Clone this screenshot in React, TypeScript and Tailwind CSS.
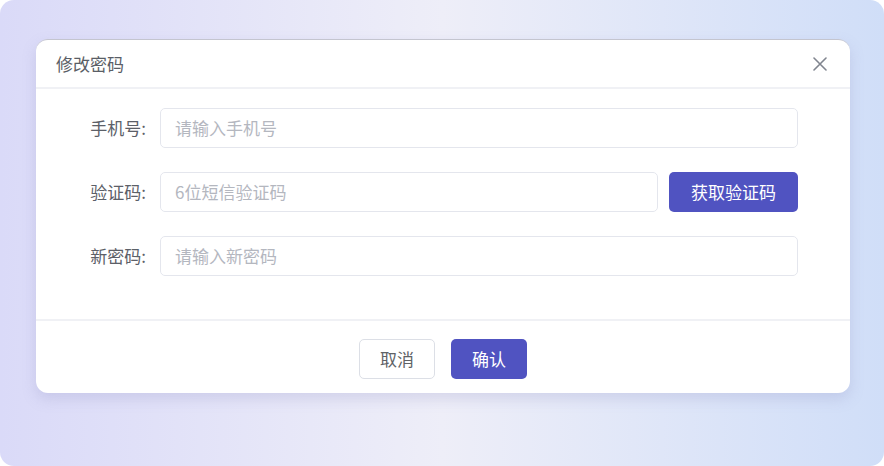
import React from "react";

const font = { fontFamily: '"Noto Sans CJK SC", "Noto Sans", sans-serif' };

function Row({ label, placeholder, withButton }: { label: string; placeholder: string; withButton?: boolean }) {
  return (
    <div className="flex items-center">
      <div className="w-[124px] pr-[14px] text-right text-[17px] text-[#5c6068]">{label}:</div>
      <div className="flex flex-1 items-center gap-[11px]">
        <div className="flex h-[40px] flex-1 items-center rounded-[5px] border border-[#e4e6ed] px-[14px] text-[17px] text-[#b4b7bf]">
          {placeholder}
        </div>
        {withButton && (
          <button className="h-[40px] w-[129px] rounded-[5px] bg-[#5053c1] text-[17px] text-white">获取验证码</button>
        )}
      </div>
    </div>
  );
}

export default function App() {
  return (
    <div className="h-[466px] w-[884px] bg-white" style={font}>
      <div className="h-full w-full rounded-[14px] bg-gradient-to-r from-[#dadaf8] via-[#eeeef8] to-[#d0def8] px-[36px] pt-[39px]">
        <div className="h-[354px] w-[814px] overflow-hidden rounded-[12px] border-t border-[#c4c5cf] bg-white shadow-[0_6px_14px_rgba(140,140,190,0.25)]">
          <div className="flex h-[49px] items-center justify-between border-b-2 border-[#f0f1f5] pl-[20px] pr-[23px]">
            <span className="text-[17px] text-[#5a5e66]">修改密码</span>
            <svg width="14" height="14" viewBox="0 0 14 14" className="text-[#80858f]">
              <path d="M1 1L13 13M13 1L1 13" stroke="currentColor" strokeWidth="1.6" strokeLinecap="round" />
            </svg>
          </div>
          <div className="flex h-[230px] flex-col gap-[24px] pr-[52px] pt-[19px]">
            <Row label="手机号" placeholder="请输入手机号" />
            <Row label="验证码" placeholder="6位短信验证码" withButton />
            <Row label="新密码" placeholder="请输入新密码" />
          </div>
          <div className="flex justify-center gap-[16px] border-t-2 border-[#f0f1f5] pt-[18px]">
            <button className="h-[40px] w-[76px] rounded-[5px] border border-[#dcdfe6] bg-white text-[17px] text-[#606266]">取消</button>
            <button className="h-[40px] w-[76px] rounded-[5px] bg-[#5053c1] text-[17px] text-white">确认</button>
          </div>
        </div>
      </div>
    </div>
  );
}
